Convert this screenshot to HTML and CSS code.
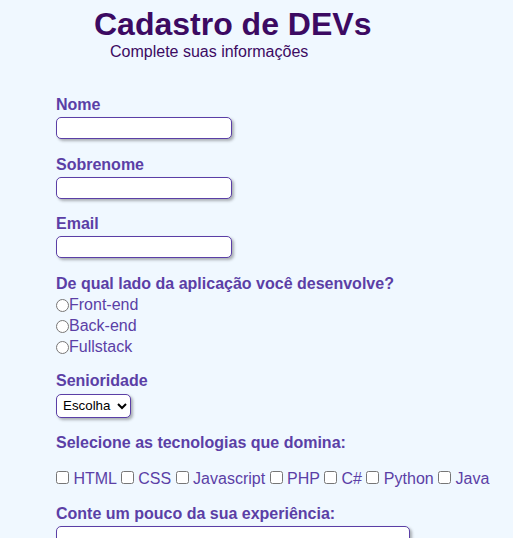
FILE: index.html
```html
<!DOCTYPE html>
<html lang="pt-BR">
<head>
<meta charset="utf-8">
<title>Cadastro de DEVs</title>
<link rel="stylesheet" href="styles.css">
</head>
<body>
<header class="header">
  <h1 class="title">Cadastro de DEVs</h1>
  <p class="subtitle">Complete suas informações</p>
</header>
<form class="form">
  <div class="field">
    <label class="label" for="nome">Nome</label>
    <input class="text-input" type="text" id="nome">
  </div>
  <div class="field">
    <label class="label" for="sobrenome">Sobrenome</label>
    <input class="text-input" type="text" id="sobrenome">
  </div>
  <div class="field">
    <label class="label" for="email">Email</label>
    <input class="text-input" type="email" id="email">
  </div>
  <div class="group group-radio">
    <p class="label">De qual lado da aplicação você desenvolve?</p>
    <label class="option"><input class="radio" type="radio" name="lado">Front-end</label>
    <label class="option"><input class="radio" type="radio" name="lado">Back-end</label>
    <label class="option"><input class="radio" type="radio" name="lado">Fullstack</label>
  </div>
  <div class="field field-select">
    <label class="label" for="senioridade">Senioridade</label>
    <select class="select" id="senioridade">
      <option>Escolha</option>
      <option>Júnior</option>
      <option>Pleno</option>
      <option>Sênior</option>
    </select>
  </div>
  <div class="group group-check">
    <p class="label">Selecione as tecnologias que domina:</p>
    <div class="checks"><input class="check" type="checkbox"> HTML <input class="check" type="checkbox"> CSS <input class="check" type="checkbox"> Javascript <input class="check" type="checkbox"> PHP <input class="check" type="checkbox"> C# <input class="check" type="checkbox"> Python <input class="check" type="checkbox"> Java</div>
  </div>
  <div class="field field-text">
    <label class="label" for="exp">Conte um pouco da sua experiência:</label>
    <textarea class="textarea" id="exp"></textarea>
  </div>
</form>
</body>
</html>
```
FILE: styles.css
```css
* {
  margin: 0;
  padding: 0;
  box-sizing: border-box;
}

body {
  background: #f0f8ff;
  font-family: "Liberation Sans", Arial, sans-serif;
  font-size: 16px;
  color: #5b3fa6;
  padding-top: 6px;
}

.header {
  padding-left: 94px;
  color: #3c0a62;
}

.title {
  font-size: 32px;
  font-weight: bold;
  line-height: normal;
}

.subtitle {
  padding-left: 16px;
  font-size: 16px;
}

.form {
  padding-left: 56px;
  margin-top: 35px;
  display: flex;
  flex-direction: column;
}

.label {
  display: block;
  font-weight: bold;
  color: #5b3fa6;
}

.field {
  display: flex;
  flex-direction: column;
  align-items: flex-start;
  gap: 3px;
  margin-bottom: 16.5px;
}

.text-input {
  width: 176px;
  height: 22px;
  border: 1px solid #5b3fa6;
  border-radius: 5px;
  background: #fff;
  box-shadow: 2px 2px 3px rgba(0, 0, 0, 0.3);
}

.group-radio {
  margin-bottom: 14px;
  display: flex;
  flex-direction: column;
}

.group-radio .label {
  margin-bottom: 2px;
}

.option {
  display: flex;
  align-items: center;
  height: 21px;
  color: #5b3fa6;
}

.radio {
  width: 13px;
  height: 13px;
  margin: 0;
}

.field-select {
  gap: 4px;
  margin-bottom: 16px;
}

.select {
  width: 75px;
  height: 24px;
  border: 1px solid #5b3fa6;
  border-radius: 5px;
  background: #fff;
  color: #000;
  font-family: "Liberation Sans", Arial, sans-serif;
  font-size: 13.33px;
  padding-left: 2px;
  box-shadow: 2px 2px 3px rgba(0, 0, 0, 0.3);
}

.group-check {
  margin-bottom: 17px;
}

.checks {
  margin-top: 18px;
  color: #5b3fa6;
}

.check {
  width: 13px;
  height: 13px;
  margin: 0;
  vertical-align: baseline;
}

.field-text {
  gap: 3px;
}

.textarea {
  width: 354px;
  height: 100px;
  border: 1px solid #5b3fa6;
  border-radius: 5px;
  background: #fff;
  box-shadow: 2px 2px 3px rgba(0, 0, 0, 0.3);
  resize: none;
}
```
